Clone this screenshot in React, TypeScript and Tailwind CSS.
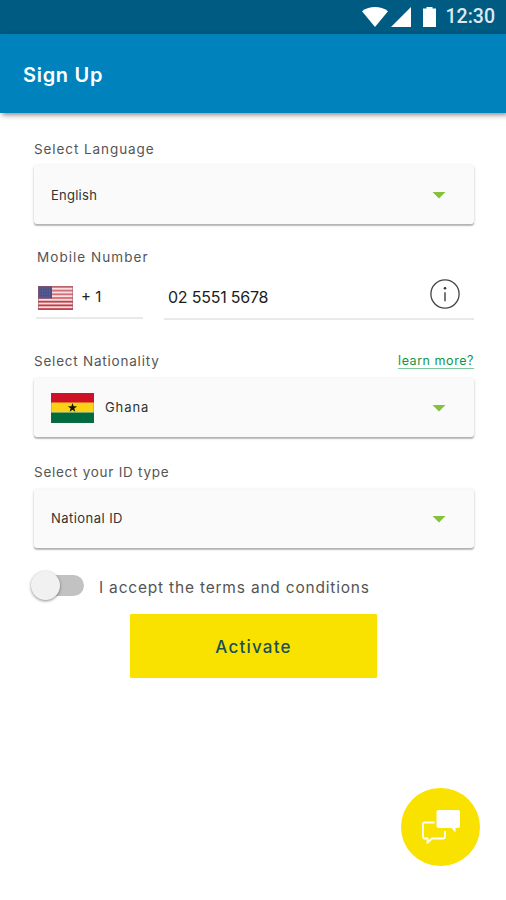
import type { ReactNode } from 'react'

const Caret = () => (
  <svg width="14" height="7" viewBox="0 0 14 7">
    <path d="M0.500 0h13L7 6.500z" fill="#84c13d" />
  </svg>
)

function SelectBox({ children }: { children: ReactNode }) {
  return (
    <button className="flex h-[59px] w-full items-center rounded-[3px] bg-[#fafafa] pl-[17px] pr-[28px] shadow-[0_1px_3px_rgba(0,0,0,0.22),0_2px_1px_rgba(0,0,0,0.18)]">
      {children}
      <span className="ml-auto mt-px">
        <Caret />
      </span>
    </button>
  )
}

function UsFlag() {
  return (
    <svg width="35" height="24" viewBox="0 0 35 24">
      <rect width="35" height="24" fill="#f5dfe1" />
      {[0, 1, 2, 3, 4, 5, 6].map((i) => (
        <rect key={i} y={i * 3.69} width="35" height="1.85" fill={i > 3 ? '#c23f49' : '#d5707a'} />
      ))}
      <rect width="14" height="12.5" fill="#4c5286" />
      {[2, 5, 8, 11].map((y) => (
        <path key={y} d={`M1.5 ${y}h11.5`} stroke="#777ca8" strokeWidth="0.8" strokeDasharray="0.9 1.5" />
      ))}
      <rect x="0.25" y="0.25" width="34.5" height="23.5" fill="none" stroke="#9b5963" strokeWidth="0.5" />
    </svg>
  )
}

function GhanaFlag() {
  return (
    <svg width="43" height="30" viewBox="0 0 43 30">
      <rect width="43" height="10" fill="#ce1126" />
      <rect y="9.5" width="43" height="10" fill="#fcd116" />
      <rect y="19.5" width="43" height="10.5" fill="#006b3f" />
      <path
        d="M21.5 10l1.1 3.3h3.5l-2.8 2.1 1.1 3.4-2.9-2.1-2.9 2.1 1.1-3.4-2.8-2.1h3.5z"
        fill="#161400"
      />
      <rect x="0.25" y="0.25" width="42.5" height="29.5" fill="none" stroke="#555" strokeOpacity="0.4" strokeWidth="0.5" />
    </svg>
  )
}

export default function App() {
  return (
    <div className="relative flex min-h-[900px] flex-col bg-white font-['Inter',sans-serif] text-[#333]">
      <div className="flex h-[34px] items-center justify-end bg-[#005b83] pr-[11px]">
        <svg width="26" height="20" viewBox="0 0 26 20" className="mr-[3px]">
          <path d="M0 4.2C7.5-1.3 18.5-1.3 26 4.2L13 20z" fill="#fff" />
        </svg>
        <svg width="20" height="20" viewBox="0 0 20 20" className="mr-[12px]">
          <path d="M20 0v20H0z" fill="#fff" />
        </svg>
        <svg width="13" height="20" viewBox="0 0 13 20" className="mr-[10px]">
          <path d="M3.500 0h6v1.500H13V20H0V1.500h3.500z" fill="#fff" />
        </svg>
        <span className="font-['Roboto',sans-serif] text-[19.5px] leading-none font-medium text-[#dbeaf1]">12:30</span>
      </div>

      <header className="z-10 flex h-[79px] items-center bg-[#0082bd] pt-[2px] pl-[23px] shadow-[2px_2px_5px_rgba(60,40,30,0.55)]">
        <h1 className="text-[20px] font-semibold tracking-[0.7px] text-white">Sign Up</h1>
      </header>

      <main className="flex flex-col pr-[32px] pl-[34px] pt-[26px]">
        <label className="mb-[6px] h-5 text-[13.5px] leading-5 tracking-[0.92px] text-[#555]">Select Language</label>
        <SelectBox>
          <span className="pt-[2px] text-[13px] tracking-[0.25px]">English</span>
        </SelectBox>

        <label className="mt-[23px] h-5 pl-[3px] text-[13.5px] leading-5 tracking-[1.050px] text-[#555]">Mobile Number</label>
        <div className="flex h-[53px] items-start pl-[2px]">
          <div className="mr-[21px] flex h-[52px] w-[107px] items-center border-b-2 border-[#e9e9e9] pt-[11px] pl-[2px]">
            <UsFlag />
            <span className="ml-[8px] text-[15px] tracking-[0px] text-[#222]">+ 1</span>
          </div>
          <div className="flex h-[53px] flex-1 items-center border-b-2 border-[#e9e9e9] pt-[8px] pl-[4px]">
            <span className="text-[16px] tracking-[-0.22px] text-[#1c1c1c]">02 5551 5678</span>
            <svg width="30" height="30" viewBox="0 0 30 30" className="mt-[-6px] mr-[14px] ml-auto">
              <circle cx="15" cy="15" r="14.1" fill="none" stroke="#444" strokeWidth="1.3" />
              <circle cx="15" cy="9.2" r="1.3" fill="#333" />
              <path d="M15 13.2v9" stroke="#777" strokeWidth="2" />
            </svg>
          </div>
        </div>

        <div className="mt-[31px] mb-[7px] flex h-5 items-center justify-between">
          <label className="text-[13.5px] leading-5 tracking-[0.78px] text-[#555]">Select Nationality</label>
          <a href="#" className="border-b border-[#7cc79d] text-[12.5px] leading-[15px] tracking-[0.55px] text-[#109448]">learn more?</a>
        </div>
        <SelectBox>
          <GhanaFlag />
          <span className="ml-[11px] pt-px text-[13px] tracking-[0.9px]">Ghana</span>
        </SelectBox>

        <label className="mt-[25px] mb-[7px] h-5 text-[13.5px] leading-5 tracking-[0.73px] text-[#555]">Select your ID type</label>
        <SelectBox>
          <span className="pt-px text-[13px] tracking-[0.45px]">National ID</span>
        </SelectBox>

        <div className="mt-[22px] ml-[-3px] flex h-[30px] items-center">
          <div className="relative ml-[7px] h-[21px] w-[46px] rounded-full bg-[#c2c2c2]">
            <span className="absolute top-[-4px] left-[-7px] h-[29px] w-[29px] rounded-full bg-[#f1f1f1] shadow-[0_1px_3px_rgba(0,0,0,0.45)]" />
          </div>
          <span className="ml-[15px] pt-[5px] text-[15.5px] tracking-[0.8px] text-[#555]">I accept the terms and conditions</span>
        </div>

        <button className="mt-[14px] ml-[96px] h-[64px] w-[247px] rounded-[1px] bg-[#f9e200] pt-[3px] text-[17px] font-medium tracking-[1.2px] text-[#195056]">
          Activate
        </button>
      </main>

      <button className="absolute top-[788px] left-[401px] flex h-[78px] w-[79px] items-center justify-center rounded-full bg-[#f9e200]">
        <svg width="38" height="34" viewBox="0 0 38 34">
          <path
            d="M12.500 12.500H2.500a1.500 1.500 0 0 0-1.500 1.500v13a1.500 1.500 0 0 0 1.500 1.500H5.500v4l4.500-4H21a2 2 0 0 0 2-2V21"
            fill="none"
            stroke="#fff"
            strokeWidth="1.8"
          />
          <path d="M16.500 0H36a2 2 0 0 1 2 2v14a2 2 0 0 1-2 2h-2.500v4.500L29.500 18h-13a2 2 0 0 1-2-2V2a2 2 0 0 1 2-2z" fill="#fff" />
        </svg>
      </button>
    </div>
  )
}
